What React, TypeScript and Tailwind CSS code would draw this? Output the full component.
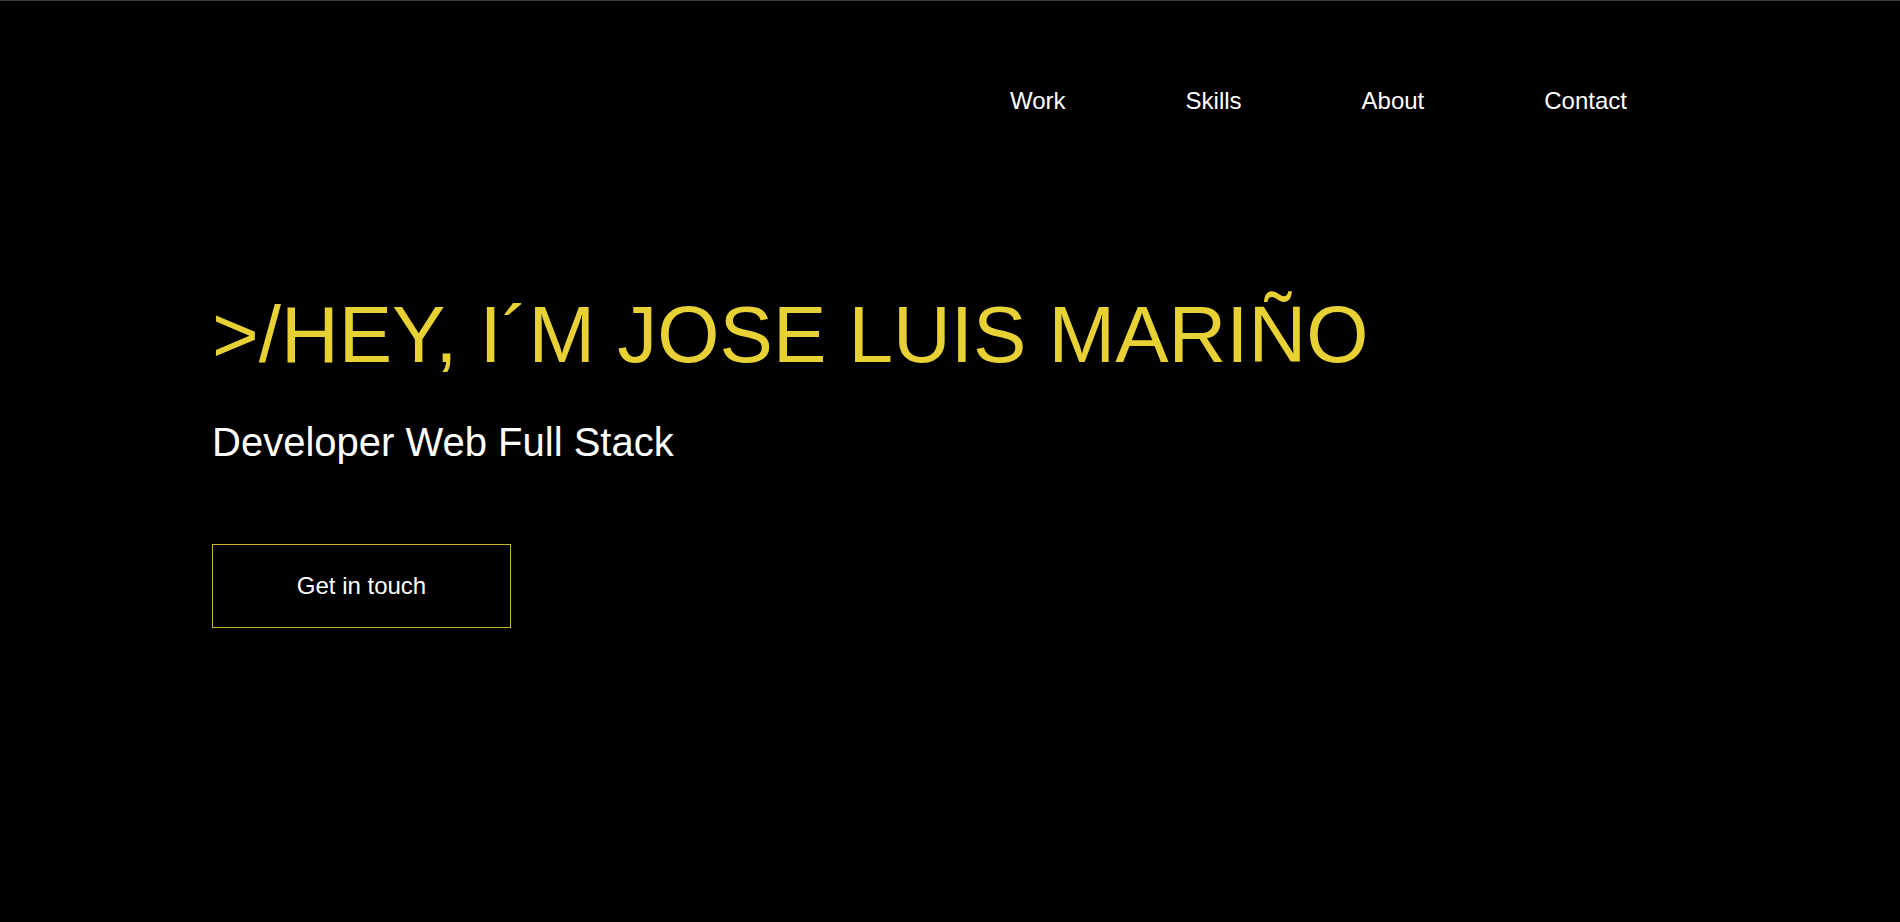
// Landing hero with a top nav, headline, role and contact button.
const links = ['Work', 'Skills', 'About', 'Contact'];

export default function App() {
  return (
    <div className="min-h-screen bg-black border-t border-[#3c3c3c] font-['Liberation_Sans',Arial,sans-serif]">
      <nav className="flex justify-end gap-[120px] pr-[273px] pt-[88px]">
        {links.map((link) => (
          <a key={link} href={`#${link.toLowerCase()}`} className="text-[24px] leading-[24px] text-white">
            {link}
          </a>
        ))}
      </nav>

      <main className="pl-[212px] pt-[182px]">
        <h1 className="text-[80px] leading-[80px] text-[#e8d134]">&gt;/HEY, I´M JOSE LUIS MARIÑO</h1>
        <p className="mt-[47px] text-[40px] leading-[40px] text-white">Developer Web Full Stack</p>
        <button className="mt-[82px] flex h-[84px] w-[299px] items-center justify-center border border-[#c8b134] text-[24px] text-white">
          Get in touch
        </button>
      </main>
    </div>
  );
}
